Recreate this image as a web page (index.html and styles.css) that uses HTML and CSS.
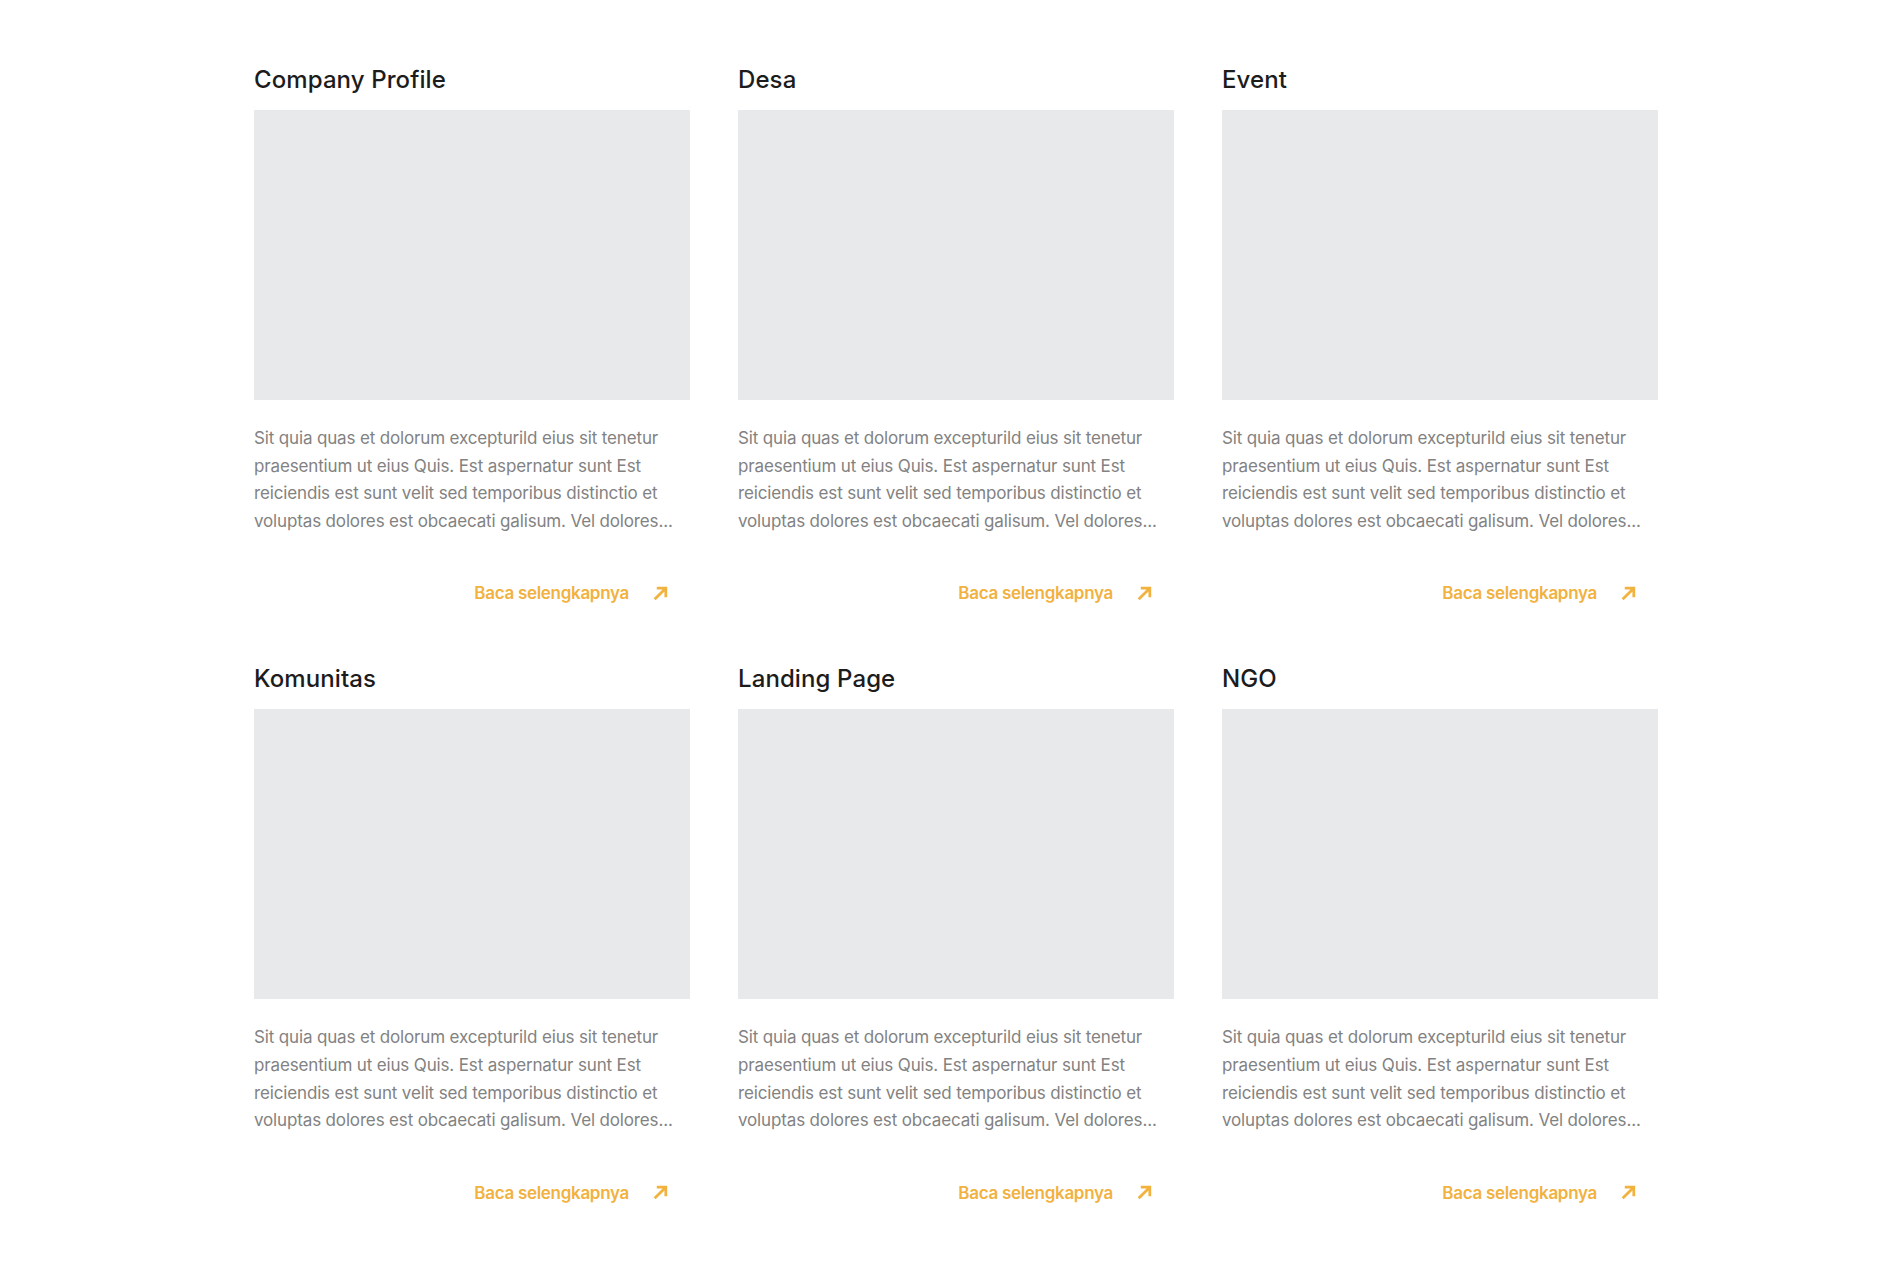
FILE: index.html
```html
<!DOCTYPE html>
<html lang="id">
<head>
<meta charset="utf-8">
<title>Kategori</title>
<link rel="stylesheet" href="styles.css">
</head>
<body>
<main class="grid">
  <article class="card">
    <h3 class="title">Company Profile</h3>
    <div class="thumb"></div>
    <p class="desc"><span>Sit quia quas et dolorum excepturild eius sit tenetur</span><span>praesentium ut eius Quis. Est aspernatur sunt Est</span><span>reiciendis est sunt velit sed temporibus distinctio et</span><span>voluptas dolores est obcaecati galisum. Vel dolores...</span></p>
    <a class="more" href="#">Baca selengkapnya <svg viewBox="0 0 16 16"><path d="M2.5 13.5 L13 3 M4.5 3 H13 V11.5"/></svg></a>
  </article>
  <article class="card">
    <h3 class="title">Desa</h3>
    <div class="thumb"></div>
    <p class="desc"><span>Sit quia quas et dolorum excepturild eius sit tenetur</span><span>praesentium ut eius Quis. Est aspernatur sunt Est</span><span>reiciendis est sunt velit sed temporibus distinctio et</span><span>voluptas dolores est obcaecati galisum. Vel dolores...</span></p>
    <a class="more" href="#">Baca selengkapnya <svg viewBox="0 0 16 16"><path d="M2.5 13.5 L13 3 M4.5 3 H13 V11.5"/></svg></a>
  </article>
  <article class="card">
    <h3 class="title">Event</h3>
    <div class="thumb"></div>
    <p class="desc"><span>Sit quia quas et dolorum excepturild eius sit tenetur</span><span>praesentium ut eius Quis. Est aspernatur sunt Est</span><span>reiciendis est sunt velit sed temporibus distinctio et</span><span>voluptas dolores est obcaecati galisum. Vel dolores...</span></p>
    <a class="more" href="#">Baca selengkapnya <svg viewBox="0 0 16 16"><path d="M2.5 13.5 L13 3 M4.5 3 H13 V11.5"/></svg></a>
  </article>
  <article class="card">
    <h3 class="title">Komunitas</h3>
    <div class="thumb"></div>
    <p class="desc"><span>Sit quia quas et dolorum excepturild eius sit tenetur</span><span>praesentium ut eius Quis. Est aspernatur sunt Est</span><span>reiciendis est sunt velit sed temporibus distinctio et</span><span>voluptas dolores est obcaecati galisum. Vel dolores...</span></p>
    <a class="more" href="#">Baca selengkapnya <svg viewBox="0 0 16 16"><path d="M2.5 13.5 L13 3 M4.5 3 H13 V11.5"/></svg></a>
  </article>
  <article class="card">
    <h3 class="title">Landing Page</h3>
    <div class="thumb"></div>
    <p class="desc"><span>Sit quia quas et dolorum excepturild eius sit tenetur</span><span>praesentium ut eius Quis. Est aspernatur sunt Est</span><span>reiciendis est sunt velit sed temporibus distinctio et</span><span>voluptas dolores est obcaecati galisum. Vel dolores...</span></p>
    <a class="more" href="#">Baca selengkapnya <svg viewBox="0 0 16 16"><path d="M2.5 13.5 L13 3 M4.5 3 H13 V11.5"/></svg></a>
  </article>
  <article class="card">
    <h3 class="title">NGO</h3>
    <div class="thumb"></div>
    <p class="desc"><span>Sit quia quas et dolorum excepturild eius sit tenetur</span><span>praesentium ut eius Quis. Est aspernatur sunt Est</span><span>reiciendis est sunt velit sed temporibus distinctio et</span><span>voluptas dolores est obcaecati galisum. Vel dolores...</span></p>
    <a class="more" href="#">Baca selengkapnya <svg viewBox="0 0 16 16"><path d="M2.5 13.5 L13 3 M4.5 3 H13 V11.5"/></svg></a>
  </article>
</main>
</body>
</html>
```
FILE: styles.css
```css
html, body {
  margin: 0;
  padding: 0;
  background: #ffffff;
}
body {
  font-family: "Inter", "Liberation Sans", sans-serif;
}
.grid {
  display: grid;
  grid-template-columns: repeat(3, 436px);
  column-gap: 48px;
  row-gap: 58px;
  padding: 64px 0 0 254px;
}
.card {
  display: flex;
  flex-direction: column;
}
.title {
  margin: 0 0 14px;
  font-size: 24px;
  line-height: 32px;
  font-weight: 500;
  color: #1c1c1c;
  letter-spacing: 0.1px;
}
.thumb {
  height: 290px;
  background: #e8e9eb;
}
.desc {
  margin: 25px 0 0;
  font-size: 17px;
  line-height: 27.6px;
  color: #828282;
  letter-spacing: -0.15px;
}
.desc span {
  display: block;
  white-space: nowrap;
}
.more {
  margin-top: 46px;
  align-self: flex-end;
  margin-right: 21px;
  display: flex;
  align-items: center;
  gap: 23px;
  font-size: 17px;
  line-height: 24px;
  font-weight: 600;
  color: #f1b23f;
  text-decoration: none;
  letter-spacing: -0.3px;
}
.more svg {
  width: 17px;
  height: 17px;
  fill: none;
  stroke: #f1b23f;
  stroke-width: 2.6;
  stroke-linecap: butt;
  stroke-linejoin: miter;
}
```
